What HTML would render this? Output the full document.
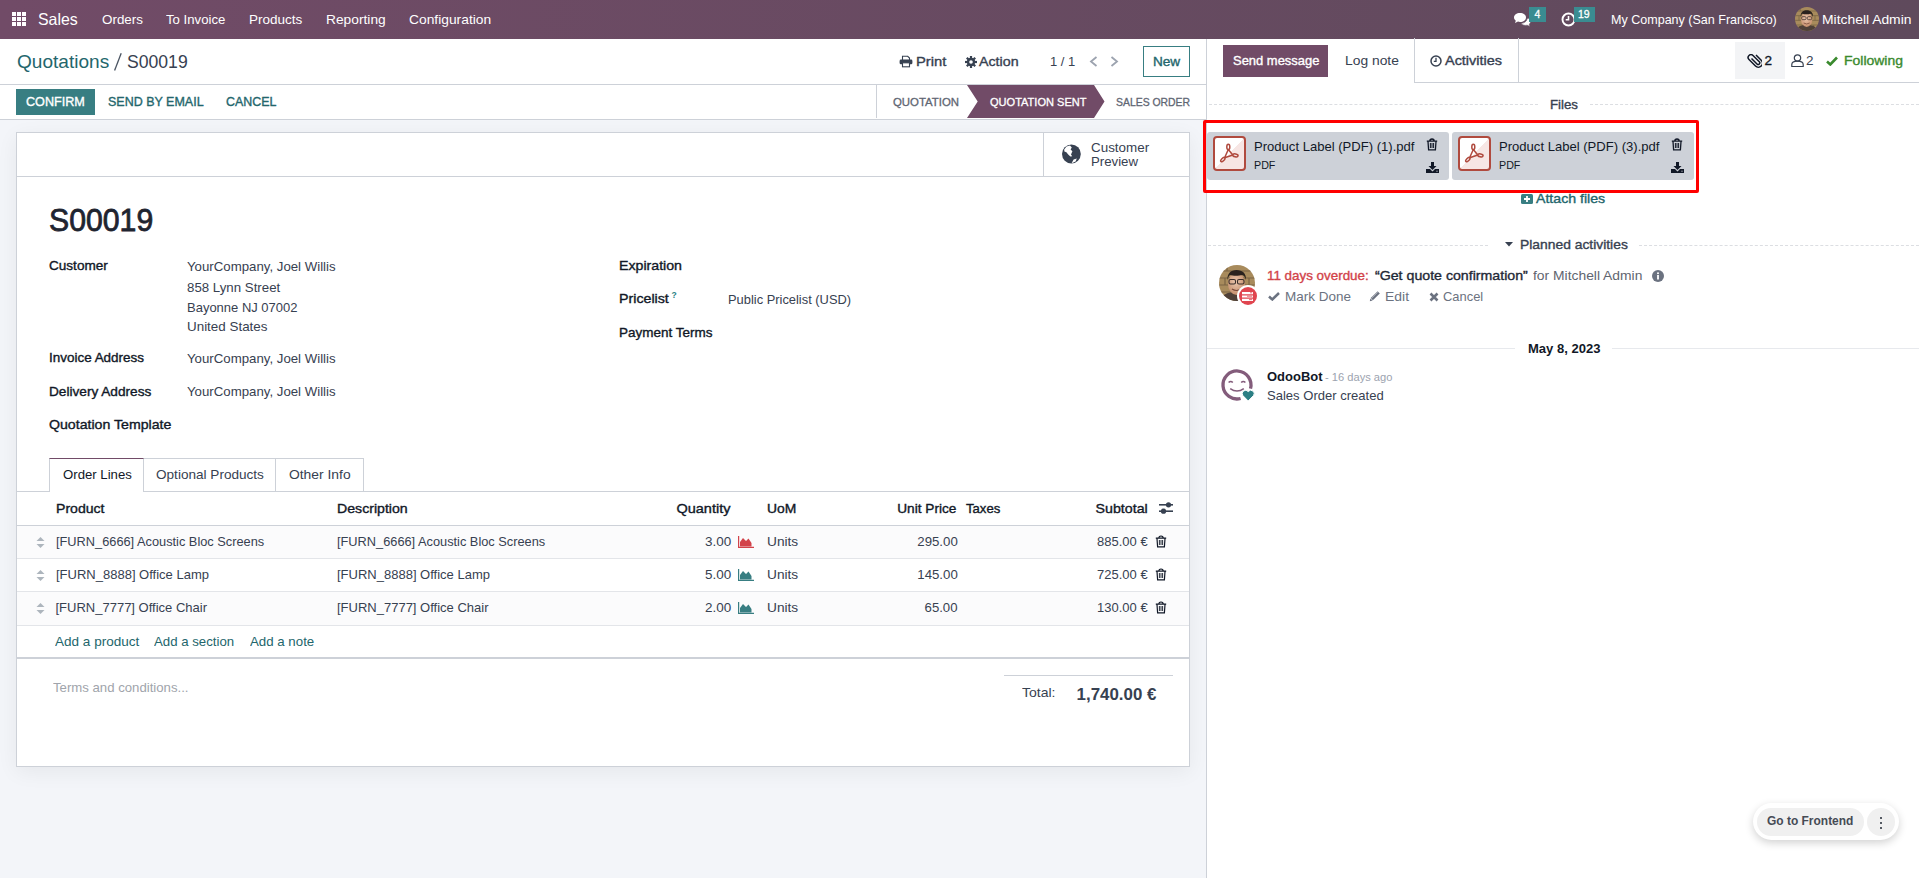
<!DOCTYPE html>
<html><head><meta charset="utf-8"><title>S00019</title>
<style>
html,body{margin:0;padding:0;width:1919px;height:878px;overflow:hidden;background:#fff;font-family:"Liberation Sans",sans-serif;}
.t{position:absolute;line-height:1;white-space:nowrap;font-family:"Liberation Sans",sans-serif;}
</style></head><body>
<div style="position:absolute;left:0px;top:0px;width:1919px;height:39px;background:linear-gradient(to right,#714B67,#5F4A5C);"></div>
<div style="position:absolute;left:12px;top:12px;width:4px;height:4px;background:#fff;"></div>
<div style="position:absolute;left:12px;top:17px;width:4px;height:4px;background:#fff;"></div>
<div style="position:absolute;left:12px;top:22px;width:4px;height:4px;background:#fff;"></div>
<div style="position:absolute;left:17px;top:12px;width:4px;height:4px;background:#fff;"></div>
<div style="position:absolute;left:17px;top:17px;width:4px;height:4px;background:#fff;"></div>
<div style="position:absolute;left:17px;top:22px;width:4px;height:4px;background:#fff;"></div>
<div style="position:absolute;left:22px;top:12px;width:4px;height:4px;background:#fff;"></div>
<div style="position:absolute;left:22px;top:17px;width:4px;height:4px;background:#fff;"></div>
<div style="position:absolute;left:22px;top:22px;width:4px;height:4px;background:#fff;"></div>
<div class="t" style="left:38.2px;top:11.0px;font-size:16.5px;color:#fff;transform:scaleX(0.9641);transform-origin:left top;">Sales</div>
<div class="t" style="left:101.9px;top:12.6px;font-size:13.5px;color:#fff;transform:scaleX(0.9936);transform-origin:left top;">Orders</div>
<div class="t" style="left:166.3px;top:12.6px;font-size:13.5px;color:#fff;transform:scaleX(0.9754);transform-origin:left top;">To Invoice</div>
<div class="t" style="left:249.2px;top:12.6px;font-size:13.5px;color:#fff;transform:scaleX(1.0004);transform-origin:left top;">Products</div>
<div class="t" style="left:325.7px;top:12.6px;font-size:13.5px;color:#fff;transform:scaleX(1.0197);transform-origin:left top;">Reporting</div>
<div class="t" style="left:409.0px;top:12.6px;font-size:13.5px;color:#fff;transform:scaleX(1.0235);transform-origin:left top;">Configuration</div>
<svg style="position:absolute;left:1513px;top:12px;" width="18" height="15" viewBox="0 0 18 15"><path d="M7 1C3.5 1 1 3 1 5.5c0 1.3.7 2.4 1.8 3.2L2 11l3-1.4c.6.2 1.3.3 2 .3 3.5 0 6-2 6-4.5S10.5 1 7 1z" fill="#fff"/><path d="M14 6.5c0 2.6-2.7 4.7-6 4.9.9 1.2 2.6 2 4.5 2 .6 0 1.1-.1 1.6-.2L17 14.5l-.8-2.3c.9-.7 1.5-1.6 1.5-2.7 0-1.3-.9-2.5-2.2-3.2z" fill="#fff" stroke="#624a5e" stroke-width=".6"/></svg>
<div style="position:absolute;left:1529px;top:7px;width:17px;height:15px;background:#3A8C91;"></div>
<div class="t" style="left:1534.5px;top:8.8px;font-size:10.5px;-webkit-text-stroke:0.29px #fff;color:#fff;">4</div>
<svg style="position:absolute;left:1561px;top:12px;" width="15" height="15" viewBox="0 0 15 15"><circle cx="7.5" cy="7.5" r="6" fill="none" stroke="#fff" stroke-width="1.9"/><path d="M7.5 4v3.8h-2.8" fill="none" stroke="#fff" stroke-width="1.6"/></svg>
<div style="position:absolute;left:1574px;top:7px;width:21px;height:15px;background:#3A8C91;"></div>
<div class="t" style="left:1578.0px;top:8.8px;font-size:10.5px;-webkit-text-stroke:0.29px #fff;color:#fff;">19</div>
<div class="t" style="left:1610.7px;top:12.6px;font-size:13.5px;color:#fff;transform:scaleX(0.9285);transform-origin:left top;">My Company (San Francisco)</div>
<svg style="position:absolute;left:1795px;top:7px" width="24" height="24" viewBox="0 0 36 36"><defs><clipPath id="cnav"><circle cx="18" cy="18" r="18"/></clipPath><radialGradient id="fnav" cx=".45" cy=".4" r=".6"><stop offset="0" stop-color="#EBC7AE"/><stop offset="1" stop-color="#C48E6C"/></radialGradient></defs><g clip-path="url(#cnav)"><rect width="36" height="36" fill="#A88B5C"/><path d="M0 6h36M0 13h36M0 20h36M0 27h36M8 0v6M22 6v7M6 13v7M30 13v7M14 20v7M28 27v9" stroke="#7A6444" stroke-width="1.2"/><path d="M2 36c1-7 6-9 16-9s14 3 15 9z" fill="#4E4038"/><ellipse cx="17.5" cy="19" rx="8.5" ry="11" fill="url(#fnav)"/><path d="M8.5 15c-.5-6 3-10 9-10s10 3.5 9.5 10c-1-3-2-4.5-4-5-3 1-9 1-12 0-1.5 1-2 3-2.5 5z" fill="#2A221E"/><rect x="10" y="14.5" width="6.5" height="4.5" rx="1.5" fill="none" stroke="#3A2E2A" stroke-width="1.1"/><rect x="18.5" y="14.5" width="6.5" height="4.5" rx="1.5" fill="none" stroke="#3A2E2A" stroke-width="1.1"/><path d="M13 24q4.5 3 9 0" stroke="#7A4A3A" stroke-width="1.2" fill="none"/></g></svg>
<div class="t" style="left:1822.0px;top:12.6px;font-size:13.5px;color:#fff;transform:scaleX(1.0282);transform-origin:left top;">Mitchell Admin</div>
<div style="position:absolute;left:0px;top:39px;width:1206px;height:80px;background:#fff;"></div>
<div style="position:absolute;left:0px;top:84px;width:1206px;height:1px;background:#CDD1D8;"></div>
<div style="position:absolute;left:0px;top:119px;width:1206px;height:1px;background:#CDD1D8;"></div>
<div style="position:absolute;left:0px;top:120px;width:1206px;height:758px;background:#F3F5F9;"></div>
<div class="t" style="left:16.6px;top:51.9px;font-size:19px;color:#23666C;transform:scaleX(1.0032);transform-origin:left top;">Quotations</div>
<svg style="position:absolute;left:112px;top:51px;" width="12" height="22" viewBox="0 0 12 22"><line x1="2.6" y1="19.6" x2="9.2" y2="2.2" stroke="#4B5563" stroke-width="1.3"/></svg>
<div class="t" style="left:127.3px;top:51.9px;font-size:19px;color:#374151;transform:scaleX(0.9265);transform-origin:left top;">S00019</div>
<svg style="position:absolute;left:899px;top:55px;" width="14" height="13" viewBox="0 0 14 13"><path d="M3.5 5V1.3h5.2l1.8 1.8V5" fill="none" stroke="#374151" stroke-width="1.1"/><rect x="0.6" y="4.6" width="12.8" height="4.6" rx="1.3" fill="#374151"/><rect x="3.5" y="7.8" width="7" height="4" fill="#fff" stroke="#374151" stroke-width="1.1"/></svg>
<div class="t" style="left:915.6px;top:54.5px;font-size:13.5px;-webkit-text-stroke:0.37px #374151;color:#374151;transform:scaleX(1.0949);transform-origin:left top;">Print</div>
<svg style="position:absolute;left:965px;top:56px;" width="12" height="12" viewBox="0 0 12 12"><g fill="#374151"><circle cx="6" cy="6" r="4.2"/><g stroke="#374151" stroke-width="2.2"><line x1="6" y1="0" x2="6" y2="12"/><line x1="0" y1="6" x2="12" y2="6"/><line x1="1.8" y1="1.8" x2="10.2" y2="10.2"/><line x1="10.2" y1="1.8" x2="1.8" y2="10.2"/></g></g><circle cx="6" cy="6" r="1.8" fill="#fff"/></svg>
<div class="t" style="left:979.4px;top:54.5px;font-size:13.5px;-webkit-text-stroke:0.37px #374151;color:#374151;transform:scaleX(1.0551);transform-origin:left top;">Action</div>
<div class="t" style="left:1050.0px;top:54.6px;font-size:13px;color:#374151;transform:scaleX(1.0001);transform-origin:left top;">1 / 1</div>
<svg style="position:absolute;left:1089px;top:56px;" width="9" height="11" viewBox="0 0 9 11"><path d="M7.5 1 2 5.5 7.5 10" fill="none" stroke="#9CA3AF" stroke-width="1.8"/></svg>
<svg style="position:absolute;left:1110px;top:56px;" width="9" height="11" viewBox="0 0 9 11"><path d="M1.5 1 7 5.5 1.5 10" fill="none" stroke="#9CA3AF" stroke-width="1.8"/></svg>
<div style="position:absolute;left:1143px;top:46px;width:47px;height:31px;border:1px solid #387E82;box-sizing:border-box;"></div>
<div class="t" style="left:1153.4px;top:54.5px;font-size:13.5px;-webkit-text-stroke:0.37px #23666C;color:#23666C;transform:scaleX(1.0068);transform-origin:left top;">New</div>
<div style="position:absolute;left:16px;top:89px;width:79px;height:26px;background:#387E82;"></div>
<div class="t" style="left:26.4px;top:94.9px;font-size:13px;-webkit-text-stroke:0.36px #fff;color:#fff;transform:scaleX(0.9708);transform-origin:left top;">CONFIRM</div>
<div class="t" style="left:107.8px;top:94.9px;font-size:13px;-webkit-text-stroke:0.36px #23666C;color:#23666C;transform:scaleX(0.9611);transform-origin:left top;">SEND BY EMAIL</div>
<div class="t" style="left:225.8px;top:94.9px;font-size:13px;-webkit-text-stroke:0.36px #23666C;color:#23666C;transform:scaleX(0.9555);transform-origin:left top;">CANCEL</div>
<div style="position:absolute;left:876px;top:85px;width:1px;height:33px;background:#CDD1D8;"></div>
<svg style="position:absolute;left:966px;top:85px;" width="140" height="33" viewBox="0 0 140 33"><polygon points="1,0 128,0 138.5,16.5 128,33 1,33 11.7,16.5" fill="#714B67"/></svg>
<div class="t" style="left:892.8px;top:95.7px;font-size:11.6px;-webkit-text-stroke:0.32px #5F6673;color:#5F6673;transform:scaleX(0.9821);transform-origin:left top;">QUOTATION</div>
<div class="t" style="left:989.5px;top:95.7px;font-size:11.6px;-webkit-text-stroke:0.32px #fff;color:#fff;transform:scaleX(0.9522);transform-origin:left top;">QUOTATION SENT</div>
<div class="t" style="left:1116.4px;top:95.7px;font-size:11.6px;-webkit-text-stroke:0.32px #5F6673;color:#5F6673;transform:scaleX(0.8984);transform-origin:left top;">SALES ORDER</div>
<div style="position:absolute;left:16px;top:132px;width:1174px;height:635px;background:#fff;border:1px solid #CDD1D8;box-sizing:border-box;box-shadow:0 5px 20px rgba(0,0,0,.06);"></div>
<div style="position:absolute;left:17px;top:176px;width:1172px;height:1px;background:#CDD1D8;"></div>
<div style="position:absolute;left:1043px;top:133px;width:1px;height:43px;background:#CDD1D8;"></div>
<svg style="position:absolute;left:1061px;top:144px;" width="20" height="20" viewBox="0 0 20 20"><circle cx="10.4" cy="10" r="9.4" fill="#374151"/><path d="M3.2 5.5 5.5 2.6 9 1.6 10.8 3.6 9.6 5.4 11.4 7.2 10 10.4 11.2 12.2 9.4 12.6 7.2 10.6 5.4 8.2 3.4 7.4z" fill="#fff"/><path d="M10.6 19.2 12.6 15.6 15.8 14.6 14.6 17.4z" fill="#fff"/></svg>
<div class="t" style="left:1090.8px;top:141.4px;font-size:13px;color:#374151;transform:scaleX(1.0327);transform-origin:left top;">Customer</div>
<div class="t" style="left:1090.8px;top:155.4px;font-size:13px;color:#374151;transform:scaleX(1.0162);transform-origin:left top;">Preview</div>
<div class="t" style="left:49.4px;top:203.8px;font-size:32px;-webkit-text-stroke:0.80px #1F2430;color:#1F2430;transform:scaleX(0.9445);transform-origin:left top;">S00019</div>
<div class="t" style="left:49.2px;top:258.9px;font-size:13px;-webkit-text-stroke:0.36px #111827;color:#111827;transform:scaleX(1.0433);transform-origin:left top;">Customer</div>
<div class="t" style="left:49.2px;top:351.4px;font-size:13px;-webkit-text-stroke:0.36px #111827;color:#111827;transform:scaleX(1.0351);transform-origin:left top;">Invoice Address</div>
<div class="t" style="left:49.2px;top:384.5px;font-size:13px;-webkit-text-stroke:0.36px #111827;color:#111827;transform:scaleX(1.0487);transform-origin:left top;">Delivery Address</div>
<div class="t" style="left:49.2px;top:417.9px;font-size:13px;-webkit-text-stroke:0.36px #111827;color:#111827;transform:scaleX(1.0880);transform-origin:left top;">Quotation Template</div>
<div class="t" style="left:619.2px;top:259.2px;font-size:13px;-webkit-text-stroke:0.36px #111827;color:#111827;transform:scaleX(1.0897);transform-origin:left top;">Expiration</div>
<div class="t" style="left:619.2px;top:291.8px;font-size:13px;-webkit-text-stroke:0.36px #111827;color:#111827;transform:scaleX(1.0941);transform-origin:left top;">Pricelist</div>
<div class="t" style="left:619.2px;top:325.7px;font-size:13px;-webkit-text-stroke:0.36px #111827;color:#111827;transform:scaleX(1.0369);transform-origin:left top;">Payment Terms</div>
<div class="t" style="left:671.6px;top:291.1px;font-size:8.5px;font-weight:700;color:#2A7F85;">?</div>
<div class="t" style="left:187.0px;top:259.6px;font-size:13px;color:#374151;transform:scaleX(1.0181);transform-origin:left top;">YourCompany, Joel Willis</div>
<div class="t" style="left:187.0px;top:281.2px;font-size:13px;color:#374151;transform:scaleX(1.0207);transform-origin:left top;">858 Lynn Street</div>
<div class="t" style="left:187.0px;top:301.1px;font-size:13px;color:#374151;transform:scaleX(0.9992);transform-origin:left top;">Bayonne NJ 07002</div>
<div class="t" style="left:187.0px;top:320.1px;font-size:13px;color:#374151;transform:scaleX(1.0314);transform-origin:left top;">United States</div>
<div class="t" style="left:187.0px;top:352.2px;font-size:13px;color:#374151;transform:scaleX(1.0181);transform-origin:left top;">YourCompany, Joel Willis</div>
<div class="t" style="left:187.0px;top:385.2px;font-size:13px;color:#374151;transform:scaleX(1.0181);transform-origin:left top;">YourCompany, Joel Willis</div>
<div class="t" style="left:727.8px;top:292.6px;font-size:13px;color:#374151;transform:scaleX(0.9907);transform-origin:left top;">Public Pricelist (USD)</div>
<div style="position:absolute;left:17px;top:491px;width:1172px;height:1px;background:#CDD1D8;"></div>
<div style="position:absolute;left:49px;top:458px;width:95px;height:34px;background:#fff;border:1px solid #CDD1D8;border-top:1px solid #714B67;border-bottom:none;box-sizing:border-box;"></div>
<div style="position:absolute;left:144px;top:458px;width:132px;height:34px;border:1px solid #CDD1D8;border-left:none;box-sizing:border-box;"></div>
<div style="position:absolute;left:275px;top:458px;width:89px;height:34px;border:1px solid #CDD1D8;box-sizing:border-box;"></div>
<div class="t" style="left:62.5px;top:467.9px;font-size:13px;color:#111827;transform:scaleX(1.0129);transform-origin:left top;">Order Lines</div>
<div class="t" style="left:156.2px;top:467.9px;font-size:13px;color:#374151;transform:scaleX(1.0441);transform-origin:left top;">Optional Products</div>
<div class="t" style="left:288.6px;top:467.9px;font-size:13px;color:#374151;transform:scaleX(1.0655);transform-origin:left top;">Other Info</div>
<div class="t" style="left:55.5px;top:501.9px;font-size:13px;-webkit-text-stroke:0.36px #111827;color:#111827;transform:scaleX(1.0823);transform-origin:left top;">Product</div>
<div class="t" style="left:337.0px;top:501.9px;font-size:13px;-webkit-text-stroke:0.36px #111827;color:#111827;transform:scaleX(1.0872);transform-origin:left top;">Description</div>
<div class="t" style="right:1188.5px;top:501.9px;font-size:13px;-webkit-text-stroke:0.36px #111827;color:#111827;transform:scaleX(1.1152);transform-origin:right top;">Quantity</div>
<div class="t" style="left:767.3px;top:501.9px;font-size:13px;-webkit-text-stroke:0.36px #111827;color:#111827;transform:scaleX(1.0673);transform-origin:left top;">UoM</div>
<div class="t" style="right:962.7px;top:501.9px;font-size:13px;-webkit-text-stroke:0.36px #111827;color:#111827;transform:scaleX(1.0486);transform-origin:right top;">Unit Price</div>
<div class="t" style="left:965.6px;top:501.9px;font-size:13px;-webkit-text-stroke:0.36px #111827;color:#111827;transform:scaleX(1.0098);transform-origin:left top;">Taxes</div>
<div class="t" style="right:771.4px;top:501.9px;font-size:13px;-webkit-text-stroke:0.36px #111827;color:#111827;transform:scaleX(1.0922);transform-origin:right top;">Subtotal</div>
<svg style="position:absolute;left:1159px;top:501px;" width="14" height="14" viewBox="0 0 14 14"><g fill="#374151"><rect x="0" y="3" width="14" height="1.6"/><rect x="0" y="9.4" width="14" height="1.6"/><circle cx="9.5" cy="3.8" r="2.6"/><circle cx="4.5" cy="10.2" r="2.6"/></g></svg>
<div style="position:absolute;left:17px;top:525px;width:1172px;height:1px;background:#CDD1D8;"></div>
<div style="position:absolute;left:17px;top:526px;width:1172px;height:32px;background:#FBFBFC;"></div>
<div style="position:absolute;left:17px;top:558px;width:1172px;height:1px;background:#E3E5E9;"></div>
<svg style="position:absolute;left:36px;top:537px;" width="9" height="11" viewBox="0 0 9 11"><path d="M4.5 0 8.5 4H.5z M4.5 11 8.5 7H.5z" fill="#ADB5BD"/></svg>
<div class="t" style="left:55.5px;top:534.9px;font-size:13px;color:#374151;transform:scaleX(0.9834);transform-origin:left top;">[FURN_6666] Acoustic Bloc Screens</div>
<div class="t" style="left:337.0px;top:534.9px;font-size:13px;color:#374151;transform:scaleX(0.9834);transform-origin:left top;">[FURN_6666] Acoustic Bloc Screens</div>
<div class="t" style="right:1188.1px;top:534.9px;font-size:13px;color:#374151;transform:scaleX(1.0351);transform-origin:right top;">3.00</div>
<svg style="position:absolute;left:738px;top:536px;" width="16" height="12" viewBox="0 0 16 12"><path d="M0.6 0v11.4H16" fill="none" stroke="#D2434A" stroke-width="1.2"/><path d="M2 10.5V6l3-4 3 3 2.5-2.5 3 4.5v3.5z" fill="#D2434A"/></svg>
<div class="t" style="left:767.3px;top:534.9px;font-size:13px;color:#374151;transform:scaleX(1.0532);transform-origin:left top;">Units</div>
<div class="t" style="right:961.5px;top:534.9px;font-size:13px;color:#374151;transform:scaleX(1.0185);transform-origin:right top;">295.00</div>
<div class="t" style="right:771.0px;top:534.9px;font-size:13px;color:#374151;transform:scaleX(0.9978);transform-origin:right top;">885.00 €</div>
<svg style="position:absolute;left:1155px;top:535px;" width="12" height="13" viewBox="0 0 12 13"><path d="M0.8 3.2h10.4M3.8 3.2Q3.8 1 6 1T8.2 3.2M2 3.5l.6 8.3h6.8l.6-8.3" fill="none" stroke="#111827" stroke-width="1.2"/><path d="M4.4 5v5M6 5v5M7.6 5v5" stroke="#111827" stroke-width=".9"/></svg>
<div style="position:absolute;left:17px;top:591px;width:1172px;height:1px;background:#E3E5E9;"></div>
<svg style="position:absolute;left:36px;top:570px;" width="9" height="11" viewBox="0 0 9 11"><path d="M4.5 0 8.5 4H.5z M4.5 11 8.5 7H.5z" fill="#ADB5BD"/></svg>
<div class="t" style="left:55.5px;top:567.9px;font-size:13px;color:#374151;transform:scaleX(1.0003);transform-origin:left top;">[FURN_8888] Office Lamp</div>
<div class="t" style="left:337.0px;top:567.9px;font-size:13px;color:#374151;transform:scaleX(1.0003);transform-origin:left top;">[FURN_8888] Office Lamp</div>
<div class="t" style="right:1188.1px;top:567.9px;font-size:13px;color:#374151;transform:scaleX(1.0351);transform-origin:right top;">5.00</div>
<svg style="position:absolute;left:738px;top:569px;" width="16" height="12" viewBox="0 0 16 12"><path d="M0.6 0v11.4H16" fill="none" stroke="#387E82" stroke-width="1.2"/><path d="M2 10.5V6l3-4 3 3 2.5-2.5 3 4.5v3.5z" fill="#387E82"/></svg>
<div class="t" style="left:767.3px;top:567.9px;font-size:13px;color:#374151;transform:scaleX(1.0532);transform-origin:left top;">Units</div>
<div class="t" style="right:961.5px;top:567.9px;font-size:13px;color:#374151;transform:scaleX(1.0185);transform-origin:right top;">145.00</div>
<div class="t" style="right:771.0px;top:567.9px;font-size:13px;color:#374151;transform:scaleX(0.9978);transform-origin:right top;">725.00 €</div>
<svg style="position:absolute;left:1155px;top:568px;" width="12" height="13" viewBox="0 0 12 13"><path d="M0.8 3.2h10.4M3.8 3.2Q3.8 1 6 1T8.2 3.2M2 3.5l.6 8.3h6.8l.6-8.3" fill="none" stroke="#111827" stroke-width="1.2"/><path d="M4.4 5v5M6 5v5M7.6 5v5" stroke="#111827" stroke-width=".9"/></svg>
<div style="position:absolute;left:17px;top:592px;width:1172px;height:33px;background:#FBFBFC;"></div>
<div style="position:absolute;left:17px;top:625px;width:1172px;height:1px;background:#E3E5E9;"></div>
<svg style="position:absolute;left:36px;top:603px;" width="9" height="11" viewBox="0 0 9 11"><path d="M4.5 0 8.5 4H.5z M4.5 11 8.5 7H.5z" fill="#ADB5BD"/></svg>
<div class="t" style="left:55.5px;top:600.9px;font-size:13px;color:#374151;transform:scaleX(1.0000);transform-origin:left top;">[FURN_7777] Office Chair</div>
<div class="t" style="left:337.0px;top:600.9px;font-size:13px;color:#374151;transform:scaleX(1.0000);transform-origin:left top;">[FURN_7777] Office Chair</div>
<div class="t" style="right:1188.1px;top:600.9px;font-size:13px;color:#374151;transform:scaleX(1.0351);transform-origin:right top;">2.00</div>
<svg style="position:absolute;left:738px;top:602px;" width="16" height="12" viewBox="0 0 16 12"><path d="M0.6 0v11.4H16" fill="none" stroke="#387E82" stroke-width="1.2"/><path d="M2 10.5V6l3-4 3 3 2.5-2.5 3 4.5v3.5z" fill="#387E82"/></svg>
<div class="t" style="left:767.3px;top:600.9px;font-size:13px;color:#374151;transform:scaleX(1.0532);transform-origin:left top;">Units</div>
<div class="t" style="right:961.5px;top:600.9px;font-size:13px;color:#374151;transform:scaleX(1.0139);transform-origin:right top;">65.00</div>
<div class="t" style="right:771.0px;top:600.9px;font-size:13px;color:#374151;transform:scaleX(0.9978);transform-origin:right top;">130.00 €</div>
<svg style="position:absolute;left:1155px;top:601px;" width="12" height="13" viewBox="0 0 12 13"><path d="M0.8 3.2h10.4M3.8 3.2Q3.8 1 6 1T8.2 3.2M2 3.5l.6 8.3h6.8l.6-8.3" fill="none" stroke="#111827" stroke-width="1.2"/><path d="M4.4 5v5M6 5v5M7.6 5v5" stroke="#111827" stroke-width=".9"/></svg>
<div class="t" style="left:54.6px;top:634.9px;font-size:13px;color:#23666C;transform:scaleX(1.0413);transform-origin:left top;">Add a product</div>
<div class="t" style="left:154.1px;top:634.9px;font-size:13px;color:#23666C;transform:scaleX(1.0167);transform-origin:left top;">Add a section</div>
<div class="t" style="left:249.8px;top:634.9px;font-size:13px;color:#23666C;transform:scaleX(1.0208);transform-origin:left top;">Add a note</div>
<div style="position:absolute;left:17px;top:657px;width:1172px;height:2px;background:#CDD1D8;"></div>
<div class="t" style="left:53.0px;top:680.9px;font-size:13px;color:#A0A4AB;transform:scaleX(1.0136);transform-origin:left top;">Terms and conditions...</div>
<div style="position:absolute;left:1004px;top:675px;width:169px;height:1px;background:#CDD1D8;"></div>
<div class="t" style="left:1021.8px;top:685.9px;font-size:13px;color:#374151;transform:scaleX(1.0779);transform-origin:left top;">Total:</div>
<div class="t" style="right:762.5px;top:686.1px;font-size:17px;font-weight:700;color:#374151;transform:scaleX(0.9930);transform-origin:right top;">1,740.00 €</div>
<div style="position:absolute;left:1207px;top:39px;width:712px;height:839px;background:#fff;"></div>
<div style="position:absolute;left:1206px;top:39px;width:1px;height:839px;background:#CDD1D8;"></div>
<div style="position:absolute;left:1223px;top:45px;width:105px;height:32px;background:#714B67;"></div>
<div class="t" style="left:1232.8px;top:53.7px;font-size:13px;-webkit-text-stroke:0.36px #fff;color:#fff;transform:scaleX(0.9961);transform-origin:left top;">Send message</div>
<div class="t" style="left:1344.5px;top:53.6px;font-size:13.5px;color:#374151;transform:scaleX(1.0254);transform-origin:left top;">Log note</div>
<div style="position:absolute;left:1414px;top:38px;width:105px;height:45px;border-left:1px solid #CDD1D8;border-right:1px solid #CDD1D8;box-sizing:border-box;"></div>
<div style="position:absolute;left:1414px;top:82px;width:505px;height:1px;background:#CDD1D8;"></div>
<svg style="position:absolute;left:1430px;top:55px;" width="12" height="12" viewBox="0 0 12 12"><circle cx="6" cy="6" r="5" fill="none" stroke="#374151" stroke-width="1.5"/><path d="M6 2.8v3.5H3.8" fill="none" stroke="#374151" stroke-width="1.3"/></svg>
<div class="t" style="left:1445.0px;top:53.6px;font-size:13.5px;-webkit-text-stroke:0.37px #374151;color:#374151;transform:scaleX(1.0701);transform-origin:left top;">Activities</div>
<div style="position:absolute;left:1735px;top:42px;width:50px;height:37px;background:#F3F4F6;"></div>
<svg style="position:absolute;left:1747px;top:54px;" width="15" height="15" viewBox="0 0 15 15"><g transform="translate(15,0) scale(-1,1)"><path d="M10.5 4.5 5 10a1.6 1.6 0 0 1-2.3-2.3L9 1.5a2.8 2.8 0 0 1 4 4L6.5 12a4 4 0 0 1-5.7-5.7L6 1" fill="none" stroke="#111827" stroke-width="1.5"/></g></svg>
<div class="t" style="left:1764.5px;top:53.6px;font-size:13.5px;-webkit-text-stroke:0.37px #111827;color:#111827;">2</div>
<svg style="position:absolute;left:1791px;top:54px;" width="13" height="13" viewBox="0 0 13 13"><circle cx="6.5" cy="4" r="3.2" fill="none" stroke="#374151" stroke-width="1.2"/><path d="M.8 12.5v-2c0-2 2-3.3 5.7-3.3s5.7 1.3 5.7 3.3v2z" fill="none" stroke="#374151" stroke-width="1.2"/></svg>
<div class="t" style="left:1806.0px;top:53.6px;font-size:13.5px;color:#374151;">2</div>
<svg style="position:absolute;left:1826px;top:56px;" width="12" height="10" viewBox="0 0 12 10"><path d="M1 5.5 4.3 8.5 11 1.5" fill="none" stroke="#3A8A2E" stroke-width="2.6"/></svg>
<div class="t" style="left:1844.4px;top:53.6px;font-size:13.5px;-webkit-text-stroke:0.37px #3A8A2E;color:#3A8A2E;transform:scaleX(1.0345);transform-origin:left top;">Following</div>
<div style="position:absolute;left:1209px;top:104px;width:329px;height:1px;border-top:1px dashed #DCDEE2;"></div>
<div class="t" style="left:1550.0px;top:97.9px;font-size:13px;-webkit-text-stroke:0.36px #374151;color:#374151;transform:scaleX(1.0199);transform-origin:left top;">Files</div>
<div style="position:absolute;left:1590px;top:104px;width:329px;height:1px;border-top:1px dashed #DCDEE2;"></div>
<div style="position:absolute;left:1203px;top:120px;width:496px;height:73px;border:3px solid #FF0000;box-sizing:border-box;border-radius:2px;"></div>
<div style="position:absolute;left:1207px;top:132px;width:242px;height:48px;background:#CDD1D8;border-radius:3px;"></div>
<svg style="position:absolute;left:1213px;top:136px;" width="33" height="35" viewBox="0 0 33 35"><defs><linearGradient id="pg" x1="0" y1="0" x2="1" y2="1"><stop offset=".5" stop-color="#fff"/><stop offset=".5" stop-color="#F7E6E4"/></linearGradient></defs><rect x="1" y="1" width="31" height="33" rx="3" fill="url(#pg)" stroke="#B04A3E" stroke-width="2"/><g fill="none" stroke="#B04A3E" stroke-width="1.5"><ellipse cx="15.3" cy="10.9" rx="1.5" ry="2.6"/><ellipse cx="22.4" cy="19.4" rx="2.7" ry="1.4" transform="rotate(12 22.4 19.4)"/><ellipse cx="9.8" cy="23.6" rx="2.7" ry="1.3" transform="rotate(-45 9.8 23.6)"/><path d="M15.3 13.5 11.6 21.7M15.3 13.5 19.8 19M11.6 21.7 19.8 19"/></g></svg>
<div class="t" style="left:1254.4px;top:139.9px;font-size:13px;color:#111827;transform:scaleX(1.0051);transform-origin:left top;">Product Label (PDF) (1).pdf</div>
<div class="t" style="left:1254.4px;top:160.0px;font-size:11.5px;color:#111827;transform:scaleX(0.9304);transform-origin:left top;">PDF</div>
<svg style="position:absolute;left:1426px;top:138px;" width="12" height="13" viewBox="0 0 12 13"><path d="M0.8 3.2h10.4M3.8 3.2Q3.8 1 6 1T8.2 3.2M2 3.5l.6 8.3h6.8l.6-8.3" fill="none" stroke="#111827" stroke-width="1.3"/><path d="M4.4 5v5M6 5v5M7.6 5v5" stroke="#111827" stroke-width="1"/></svg>
<svg style="position:absolute;left:1426px;top:162px;" width="13" height="11" viewBox="0 0 13 11"><path d="M5 0h3v4h2.5L6.5 8 2.5 4H5z" fill="#111827"/><path d="M0 7h4l2.5 2.5L9 7h4v4H0z" fill="#111827"/><circle cx="11" cy="9.2" r=".6" fill="#CDD1D8"/></svg>
<div style="position:absolute;left:1452px;top:132px;width:242px;height:48px;background:#CDD1D8;border-radius:3px;"></div>
<svg style="position:absolute;left:1458px;top:136px;" width="33" height="35" viewBox="0 0 33 35"><defs><linearGradient id="pg" x1="0" y1="0" x2="1" y2="1"><stop offset=".5" stop-color="#fff"/><stop offset=".5" stop-color="#F7E6E4"/></linearGradient></defs><rect x="1" y="1" width="31" height="33" rx="3" fill="url(#pg)" stroke="#B04A3E" stroke-width="2"/><g fill="none" stroke="#B04A3E" stroke-width="1.5"><ellipse cx="15.3" cy="10.9" rx="1.5" ry="2.6"/><ellipse cx="22.4" cy="19.4" rx="2.7" ry="1.4" transform="rotate(12 22.4 19.4)"/><ellipse cx="9.8" cy="23.6" rx="2.7" ry="1.3" transform="rotate(-45 9.8 23.6)"/><path d="M15.3 13.5 11.6 21.7M15.3 13.5 19.8 19M11.6 21.7 19.8 19"/></g></svg>
<div class="t" style="left:1499.4px;top:139.9px;font-size:13px;color:#111827;transform:scaleX(1.0051);transform-origin:left top;">Product Label (PDF) (3).pdf</div>
<div class="t" style="left:1499.4px;top:160.0px;font-size:11.5px;color:#111827;transform:scaleX(0.9304);transform-origin:left top;">PDF</div>
<svg style="position:absolute;left:1671px;top:138px;" width="12" height="13" viewBox="0 0 12 13"><path d="M0.8 3.2h10.4M3.8 3.2Q3.8 1 6 1T8.2 3.2M2 3.5l.6 8.3h6.8l.6-8.3" fill="none" stroke="#111827" stroke-width="1.3"/><path d="M4.4 5v5M6 5v5M7.6 5v5" stroke="#111827" stroke-width="1"/></svg>
<svg style="position:absolute;left:1671px;top:162px;" width="13" height="11" viewBox="0 0 13 11"><path d="M5 0h3v4h2.5L6.5 8 2.5 4H5z" fill="#111827"/><path d="M0 7h4l2.5 2.5L9 7h4v4H0z" fill="#111827"/><circle cx="11" cy="9.2" r=".6" fill="#CDD1D8"/></svg>
<svg style="position:absolute;left:1521px;top:194px;" width="12" height="10" viewBox="0 0 12 10"><rect x="0" y="0" width="12" height="10" rx="1.5" fill="#387E82"/><path d="M6 2v6M3 5h6" stroke="#fff" stroke-width="1.8"/></svg>
<div class="t" style="left:1536.4px;top:192.3px;font-size:13px;-webkit-text-stroke:0.36px #23666C;color:#23666C;transform:scaleX(1.0882);transform-origin:left top;">Attach files</div>
<div style="position:absolute;left:1208px;top:245px;width:280px;height:1px;border-top:1px dashed #DCDEE2;"></div>
<svg style="position:absolute;left:1505px;top:242px;" width="8" height="5" viewBox="0 0 8 5"><path d="M0 0h8L4 4.5z" fill="#374151"/></svg>
<div class="t" style="left:1520.0px;top:237.5px;font-size:13.5px;-webkit-text-stroke:0.37px #374151;color:#374151;transform:scaleX(1.0261);transform-origin:left top;">Planned activities</div>
<div style="position:absolute;left:1639px;top:245px;width:280px;height:1px;border-top:1px dashed #DCDEE2;"></div>
<svg style="position:absolute;left:1219px;top:265px" width="36" height="36" viewBox="0 0 36 36"><defs><clipPath id="cact"><circle cx="18" cy="18" r="18"/></clipPath><radialGradient id="fact" cx=".45" cy=".4" r=".6"><stop offset="0" stop-color="#EBC7AE"/><stop offset="1" stop-color="#C48E6C"/></radialGradient></defs><g clip-path="url(#cact)"><rect width="36" height="36" fill="#A88B5C"/><path d="M0 6h36M0 13h36M0 20h36M0 27h36M8 0v6M22 6v7M6 13v7M30 13v7M14 20v7M28 27v9" stroke="#7A6444" stroke-width="1.2"/><path d="M2 36c1-7 6-9 16-9s14 3 15 9z" fill="#4E4038"/><ellipse cx="17.5" cy="19" rx="8.5" ry="11" fill="url(#fact)"/><path d="M8.5 15c-.5-6 3-10 9-10s10 3.5 9.5 10c-1-3-2-4.5-4-5-3 1-9 1-12 0-1.5 1-2 3-2.5 5z" fill="#2A221E"/><rect x="10" y="14.5" width="6.5" height="4.5" rx="1.5" fill="none" stroke="#3A2E2A" stroke-width="1.1"/><rect x="18.5" y="14.5" width="6.5" height="4.5" rx="1.5" fill="none" stroke="#3A2E2A" stroke-width="1.1"/><path d="M13 24q4.5 3 9 0" stroke="#7A4A3A" stroke-width="1.2" fill="none"/></g></svg>
<div style="position:absolute;left:1237px;top:285px;width:22px;height:22px;border-radius:50%;background:#fff;"></div>
<div style="position:absolute;left:1239px;top:287px;width:18px;height:18px;border-radius:50%;background:#E0454F;"></div>
<svg style="position:absolute;left:1242px;top:292px;" width="11" height="9" viewBox="0 0 11 9"><path d="M0 0h11v2.2H0zM0 3.4h11v2.2H0zM0 6.8h11V9H0z" fill="#fff"/><path d="M8 .8h2.2M5 4.2h5.2M7 7.6h3.2" stroke="#E0454F" stroke-width=".8"/></svg>
<div class="t" style="left:1267.3px;top:268.7px;font-size:13px;-webkit-text-stroke:0.36px #D2434A;color:#D2434A;transform:scaleX(1.0295);transform-origin:left top;">11 days overdue:</div>
<div class="t" style="left:1375.0px;top:268.7px;font-size:13px;-webkit-text-stroke:0.36px #1F2937;color:#1F2937;transform:scaleX(1.0900);transform-origin:left top;">“Get quote confirmation”</div>
<div class="t" style="left:1533.4px;top:268.6px;font-size:13.5px;color:#5F6570;transform:scaleX(1.0268);transform-origin:left top;">for Mitchell Admin</div>
<svg style="position:absolute;left:1652px;top:270px;" width="12" height="12" viewBox="0 0 12 12"><circle cx="6" cy="6" r="6" fill="#6B7280"/><rect x="5.1" y="5" width="1.8" height="4.5" fill="#fff"/><circle cx="6" cy="3.3" r="1" fill="#fff"/></svg>
<svg style="position:absolute;left:1268px;top:292px;" width="12" height="9" viewBox="0 0 12 9"><path d="M1 4.5 4.3 7.5 11 1" fill="none" stroke="#6B7280" stroke-width="2.5"/></svg>
<div class="t" style="left:1284.5px;top:290.0px;font-size:13.5px;color:#6B7280;transform:scaleX(0.9995);transform-origin:left top;">Mark Done</div>
<svg style="position:absolute;left:1369px;top:290px;" width="12" height="12" viewBox="0 0 12 12"><path d="M8.6 1.2l2.2 2.2-6.9 6.9-2.2-2.2z" fill="#6B7280"/><path d="M1.4 8.4 3.6 10.6 .8 11.2z" fill="#6B7280"/><path d="M2.6 8.2 8.8 2" stroke="#fff" stroke-width=".5"/></svg>
<div class="t" style="left:1384.9px;top:290.0px;font-size:13.5px;color:#6B7280;transform:scaleX(1.0316);transform-origin:left top;">Edit</div>
<svg style="position:absolute;left:1429px;top:292px;" width="10" height="10" viewBox="0 0 10 10"><path d="M1.5 1.5l7 7M8.5 1.5l-7 7" stroke="#6B7280" stroke-width="2.6"/></svg>
<div class="t" style="left:1442.5px;top:290.0px;font-size:13.5px;color:#6B7280;transform:scaleX(0.9564);transform-origin:left top;">Cancel</div>
<div style="position:absolute;left:1207px;top:348px;width:308px;height:1px;background:#E7E9ED;"></div>
<div class="t" style="left:1528.0px;top:341.5px;font-size:13px;font-weight:700;color:#111827;transform:scaleX(1.0030);transform-origin:left top;">May 8, 2023</div>
<div style="position:absolute;left:1612px;top:348px;width:307px;height:1px;background:#E7E9ED;"></div>
<svg style="position:absolute;left:1215px;top:364px;" width="45" height="42" viewBox="0 0 45 42"><path d="M35.5 24.6A14 14 0 1 0 25.6 34.5" fill="none" stroke="#835C7B" stroke-width="3.3"/><path d="M13.6 18.6Q15.7 16.2 17.8 18.6M26.2 18.6Q28.3 16.2 30.4 18.6" fill="none" stroke="#835C7B" stroke-width="1.5"/><path d="M15.2 24.6Q22 29.5 28.8 24.6" fill="none" stroke="#835C7B" stroke-width="1.6"/><path d="M33.2 37 27.9 31.6A3 3 0 0 1 33.2 27.6 3 3 0 0 1 38.5 31.6z" fill="#2C7F84" stroke="#fff" stroke-width="1"/></svg>
<div class="t" style="left:1267.3px;top:369.9px;font-size:13px;font-weight:700;color:#111827;transform:scaleX(0.9983);transform-origin:left top;">OdooBot</div>
<div class="t" style="left:1325.0px;top:371.7px;font-size:11.5px;color:#9CA3AF;transform:scaleX(0.9672);transform-origin:left top;">- 16 days ago</div>
<div class="t" style="left:1267.3px;top:389.1px;font-size:13px;color:#374151;transform:scaleX(1.0031);transform-origin:left top;">Sales Order created</div>
<div style="position:absolute;left:1753px;top:803px;width:146px;height:37px;border-radius:19px;background:#fff;box-shadow:0 3px 8px rgba(0,0,0,.18);"></div>
<div style="position:absolute;left:1757px;top:808px;width:107px;height:28px;background:#F0F0F0;border-radius:14px;"></div>
<div class="t" style="left:1767.0px;top:815.0px;font-size:12.5px;font-weight:700;color:#464B55;transform:scaleX(0.9572);transform-origin:left top;">Go to Frontend</div>
<div style="position:absolute;left:1867px;top:808px;width:28px;height:28px;background:#F0F0F0;border-radius:50%;"></div>
<div style="position:absolute;left:1880px;top:817px;width:2px;height:2px;background:#555A63;"></div>
<div style="position:absolute;left:1880px;top:822px;width:2px;height:2px;background:#555A63;"></div>
<div style="position:absolute;left:1880px;top:827px;width:2px;height:2px;background:#555A63;"></div>
</body></html>
